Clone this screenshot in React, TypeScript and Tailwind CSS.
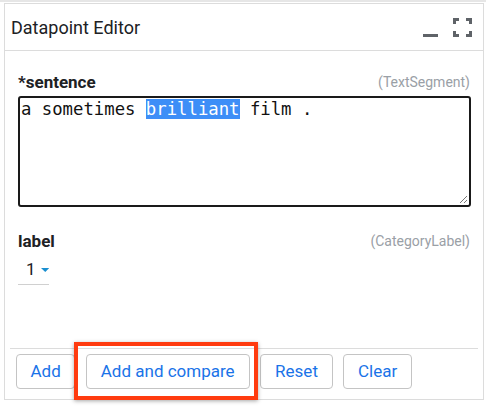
export default function App() {
  return (
    <div className="h-[406px] w-[486px] overflow-hidden bg-white" style={{ fontFamily: "Roboto, 'Open Sans', sans-serif" }}>
      <div className="h-[2px] w-full bg-[#e6e6e6]" />
      <div className="ml-[4px] mt-[1px] flex h-[397px] w-[480px] flex-col border border-[#dcdcdc]">
        {/* header */}
        <div className="flex h-[47px] shrink-0 items-center justify-between border-b border-[#dcdcdc] pl-[6px] pr-[11px]">
          <span className="text-[18px] text-[#202124]">Datapoint Editor</span>
          <div className="flex items-center gap-[14px]">
            <svg width="16" height="20" viewBox="0 0 16 20" className="mt-[2px]">
              <rect x="0" y="16" width="15" height="3" fill="#5f6368" />
            </svg>
            <svg width="19" height="19" viewBox="0 0 19 19">
              <path d="M1.5 6V1.5H6M13 1.5h4.5V6M17.5 13v4.5H13M6 17.5H1.5V13" fill="none" stroke="#5f6368" strokeWidth="3" />
            </svg>
          </div>
        </div>

        {/* body */}
        <div className="flex flex-1 flex-col px-[13px] pt-[21px]">
          <div className="flex items-end justify-between">
            <span className="text-[17px] font-bold leading-[20px] text-[#202124]">*sentence</span>
            <span className="text-[14px] leading-[20px] text-[#9aa0a6]">(TextSegment)</span>
          </div>
          <div className="relative mt-[4px] h-[111px] w-[453px] rounded-[3px] border-2 border-[#1a1a1a] px-[1px] pt-[1px]">
            <div className="text-[17.3px] leading-[20px] text-[#111]" style={{ fontFamily: "'DejaVu Sans Mono', monospace" }}>
              a sometimes <span className="bg-[#3d8ef7] text-white">brilliant</span> film .
            </div>
            <svg width="10" height="10" viewBox="0 0 10 10" className="absolute bottom-[1px] right-[1px]">
              <path d="M9 2L2 9M9 6L6 9" stroke="#777" strokeWidth="1" />
            </svg>
          </div>

          <div className="mt-[24px] flex items-end justify-between">
            <span className="text-[17px] font-bold leading-[20px] text-[#202124]">label</span>
            <span className="text-[14px] leading-[20px] text-[#9aa0a6]">(CategoryLabel)</span>
          </div>
          <div className="mt-[4px] flex h-[30px] w-[31px] items-center gap-[5px] border-b border-[#d0d0d0] pl-[8px]">
            <span className="text-[17px] text-[#202124]">1</span>
            <svg width="12" height="6" viewBox="0 0 12 6">
              <path d="M0 0h12L6 6z" fill="#1a8fd0" />
            </svg>
          </div>
        </div>

        {/* footer */}
        <div className="mx-[5px] border-t border-[#dcdcdc]" />
        <div className="flex gap-[10.5px] px-[11px] pb-[10px] pt-[5px]">
          <button className="h-[35px] rounded-[4px] border border-[#c4c4c4] px-[13.5px] text-[17px] text-[#1a73e8]">Add</button>
          <div className="relative">
            <button className="h-[35px] rounded-[4px] border border-[#c4c4c4] px-[14px] text-[17px] text-[#1a73e8]">Add and compare</button>
            <div className="pointer-events-none absolute -bottom-[11px] -left-[12px] -right-[8px] -top-[12px] border-[4px] border-[#ff3b0f] shadow-[0_1px_4px_rgba(0,0,0,0.35)]" />
          </div>
          <button className="h-[35px] rounded-[4px] border border-[#c4c4c4] px-[14px] text-[17px] text-[#1a73e8]">Reset</button>
          <button className="h-[35px] rounded-[4px] border border-[#c4c4c4] px-[13.5px] text-[17px] text-[#1a73e8]">Clear</button>
        </div>
      </div>
    </div>
  );
}
